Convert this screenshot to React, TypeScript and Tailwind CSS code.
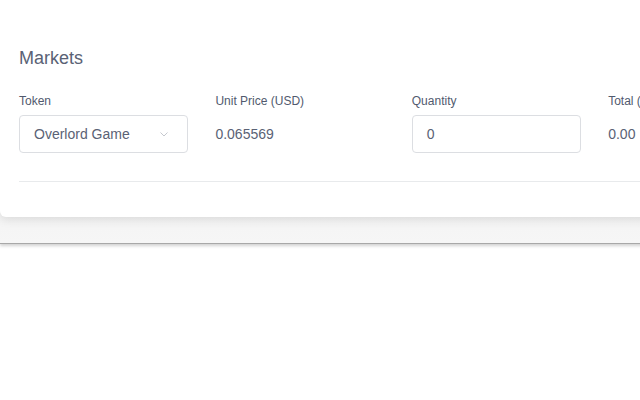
import React from "react";

export default function App() {
  const font = { fontFamily: '"Liberation Sans", Arial, sans-serif' };
  return (
    <div className="w-full min-h-[400px] bg-white overflow-hidden" style={font}>
      <div className="w-[860px] h-[244px] bg-gradient-to-b from-[#e6e6e6] to-[#f6f6f6] border-b border-[#a8a8a8] shadow-[0_2px_3px_rgba(0,0,0,0.18)]">
        <div className="h-[217px] bg-white rounded-bl-[6px] shadow-[0_3px_10px_rgba(0,0,0,0.10)] pt-[46px] pl-[19px]">
          <div className="text-[18px] leading-[24px] text-[#5a6275]">Markets</div>
          <div className="mt-[23px] flex gap-[27.4px]">
            <div className="w-[169px] flex flex-col gap-[6px]">
              <div className="text-[12px] leading-[16px] text-[#515a6e]">Token</div>
              <div className="h-[38px] border border-[#dcdee2] rounded-[4px] flex items-center pl-[14px] pr-[17px] justify-between">
                <span className="text-[14px] text-[#5a6275]">Overlord Game</span>
                <svg width="12" height="12" viewBox="0 0 12 12" fill="none">
                  <path d="M2.5 4.5 L6 8 L9.5 4.5" stroke="#c5c8ce" strokeWidth="1" />
                </svg>
              </div>
            </div>
            <div className="w-[169px] flex flex-col gap-[6px]">
              <div className="text-[12px] leading-[16px] text-[#515a6e]">Unit Price (USD)</div>
              <div className="h-[38px] flex items-center">
                <span className="text-[14px] text-[#5a6275]">0.065569</span>
              </div>
            </div>
            <div className="w-[169px] flex flex-col gap-[6px]">
              <div className="text-[12px] leading-[16px] text-[#515a6e]">Quantity</div>
              <div className="h-[38px] border border-[#dcdee2] rounded-[4px] flex items-center pl-[14px]">
                <span className="text-[14px] text-[#5a6275]">0</span>
              </div>
            </div>
            <div className="w-[169px] flex flex-col gap-[6px]">
              <div className="text-[12px] leading-[16px] text-[#515a6e]">Total (USD)</div>
              <div className="h-[38px] flex items-center">
                <span className="text-[14px] text-[#5a6275]">0.00</span>
              </div>
            </div>
          </div>
          <div className="mt-[28px] h-px bg-[#e8eaec]" />
        </div>
      </div>
    </div>
  );
}
